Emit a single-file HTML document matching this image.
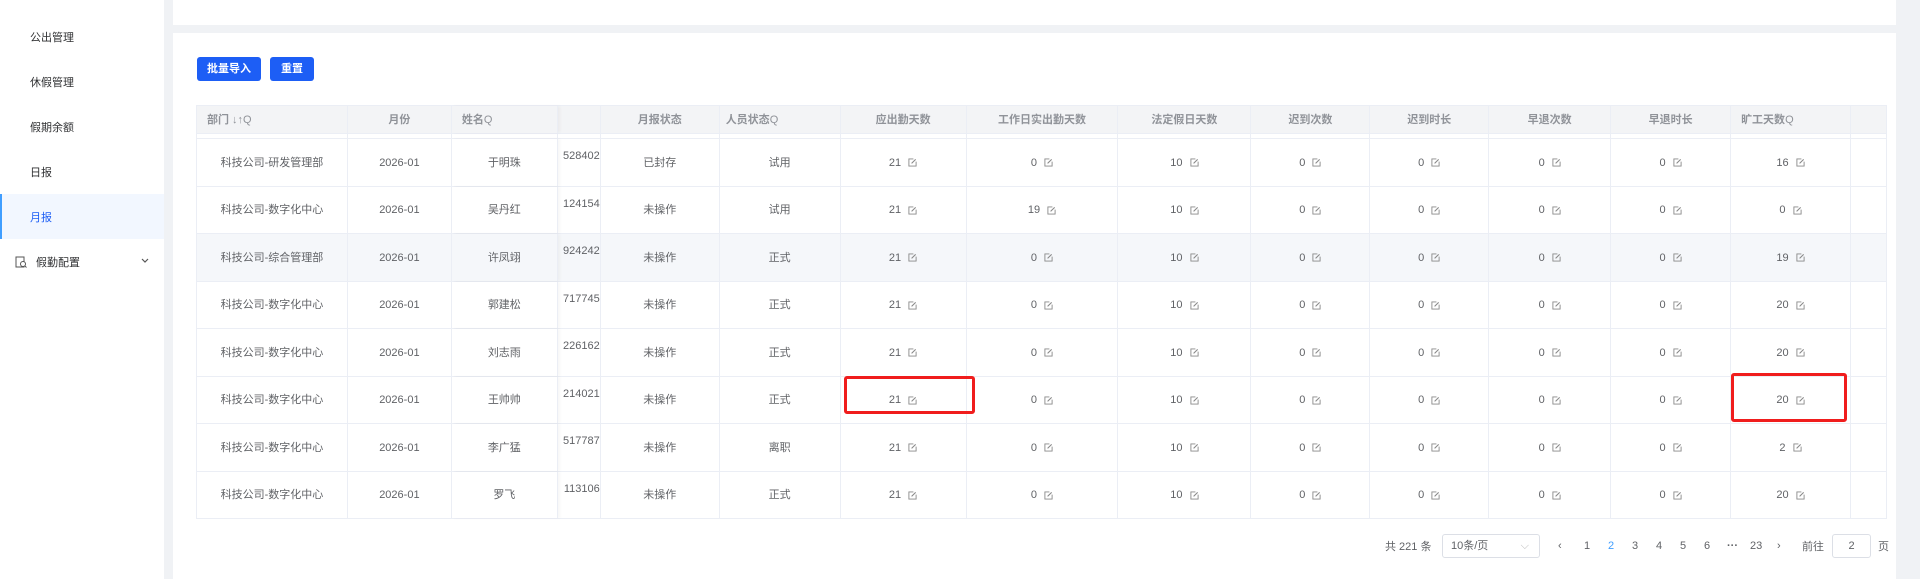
<!DOCTYPE html>
<html><head><meta charset="utf-8">
<style>
*{margin:0;padding:0;box-sizing:border-box}
body{width:1920px;height:579px;overflow:hidden;background:#f0f2f5;font-family:"Liberation Sans","Noto Sans CJK SC",sans-serif;font-size:11px;color:#606266;position:relative}
.side{position:absolute;left:0;top:0;width:164px;height:579px;background:#fff}
.mi{position:absolute;left:30px;font-size:11px;color:#303133}
.act{position:absolute;left:0;top:194px;width:164px;height:45px;background:#f2f7ff;border-left:2px solid #409eff}
.topcard{position:absolute;left:173px;top:0;width:1723px;height:25px;background:#fff}
.card{position:absolute;left:173px;top:33px;width:1723px;height:546px;background:#fff}
.btn{position:absolute;top:57px;height:24px;background:#1d5ef5;color:#fff;border-radius:3px;font-size:11px;line-height:24px;text-align:center;font-weight:bold}
.row{position:absolute;left:196px;width:1691px;display:flex;border-bottom:1px solid #ebeef5}
.row>div{border-right:1px solid #ebeef5;display:flex;align-items:center;justify-content:center;overflow:hidden;white-space:nowrap;height:100%;line-height:14px}
.hd{background:#f3f4f6;color:#909399;top:105px;height:29px;border-top:1px solid #ebeef5;border-left:1px solid #ebeef5}
.hd>div{font-weight:bold}
.hd .l{justify-content:flex-start;padding-left:10px}
.bd{border-left:1px solid #ebeef5;background:#fff}
.e{display:inline-block;width:9px;height:9px;margin-left:7px;vertical-align:middle}
.num{justify-content:flex-end!important;align-items:flex-start!important;padding-top:10px}
.fx{box-shadow:2px 0 3px rgba(0,0,0,0.04)}
.red{position:absolute;border:3px solid #f01d1d;border-radius:3px}
.pg{position:absolute;top:546px;transform:translateY(-50%);font-size:11px;color:#606266}
</style></head><body>
<div class="side">
<div class="mi" style="top:29px">公出管理</div>
<div class="mi" style="top:74px">休假管理</div>
<div class="mi" style="top:119px">假期余额</div>
<div class="mi" style="top:164px">日报</div>
<div class="act"></div>
<div class="mi" style="top:209px;color:#1d5ef5">月报</div>
<svg style="position:absolute;left:15px;top:256px" width="12" height="12" viewBox="0 0 12 12"><rect x="1" y="1" width="8" height="10" fill="none" stroke="#555" stroke-width="1"/><circle cx="8" cy="8" r="2.5" fill="#fff" stroke="#555"/><path d="M9.8 9.8L11.5 11.5" stroke="#555"/></svg>
<div class="mi" style="top:254px;left:36px">假勤配置</div>
<svg style="position:absolute;left:141px;top:258px" width="8" height="6" viewBox="0 0 8 6"><path d="M1 1L4 4L7 1" fill="none" stroke="#555" stroke-width="1.2"/></svg>
</div>
<div class="topcard"></div>
<div class="card"></div>
<div class="btn" style="left:197px;width:64px">批量导入</div>
<div class="btn" style="left:270px;width:44px">重置</div>

<div class="row hd">
<div class="l" style="width:151px">部门 <span style="font-weight:normal;margin-left:3px">↓↑Q</span></div>
<div style="width:104px">月份</div>
<div class="l fx" style="width:106px">姓名<span style="font-weight:normal">Q</span></div>
<div style="width:43px"></div>
<div style="width:119px">月报状态</div>
<div class="l" style="width:121px;padding-left:6px">人员状态<span style="font-weight:normal">Q</span></div>
<div style="width:126px">应出勤天数</div>
<div style="width:152px">工作日实出勤天数</div>
<div style="width:133px">法定假日天数</div>
<div style="width:119px">迟到次数</div>
<div style="width:119px">迟到时长</div>
<div style="width:122px">早退次数</div>
<div style="width:120px">早退时长</div>
<div class="l" style="width:120px">旷工天数<span style="font-weight:normal">Q</span></div>
<div style="width:36px"></div>
</div>
<div class="row" style="top:134px;height:5px;border-left:1px solid #ebeef5">
<div style="width:151px"></div><div style="width:104px"></div><div style="width:106px"></div><div style="width:43px"></div><div style="width:119px"></div><div style="width:121px"></div><div style="width:126px"></div><div style="width:152px"></div><div style="width:133px"></div><div style="width:119px"></div><div style="width:119px"></div><div style="width:122px"></div><div style="width:120px"></div><div style="width:120px"></div><div style="width:36px"></div>
</div>

<div id="rows"></div>
<script>
var E='<svg class="e" viewBox="0 0 10 10"><path d="M6 1H1V9H9V4" fill="none" stroke="#888" stroke-width="1"/><path d="M4 6L8.5 1.5" stroke="#888" stroke-width="1.2"/></svg>';
var d=[["研发管理部","于明珠","528402","已封存","试用",21,0,16],["数字化中心","吴丹红","124154","未操作","试用",21,19,0],["综合管理部","许凤翊","924242","未操作","正式",21,0,19],["数字化中心","郭建松","717745","未操作","正式",21,0,20],["数字化中心","刘志雨","226162","未操作","正式",21,0,20],["数字化中心","王帅帅","214021","未操作","正式",21,0,20],["数字化中心","李广猛","517787","未操作","离职",21,0,2],["数字化中心","罗飞","113106","未操作","正式",21,0,20]];
var h='';
d.forEach(function(r,i){
var t=139+Math.round(i*47.5), t2=139+Math.round((i+1)*47.5);
var bg=i==2?'background:#f5f7fa;':'';
h+='<div class="row bd" style="top:'+t+'px;height:'+(t2-t)+'px;'+bg+'">'+
'<div style="width:151px">科技公司-'+r[0]+'</div>'+
'<div style="width:104px">2026-01</div>'+
'<div class="fx" style="width:106px">'+r[1]+'</div>'+
'<div class="num" style="width:43px">'+r[2]+'</div>'+
'<div style="width:119px">'+r[3]+'</div>'+
'<div style="width:121px">'+r[4]+'</div>'+
'<div style="width:126px">'+r[5]+E+'</div>'+
'<div style="width:152px">'+r[6]+E+'</div>'+
'<div style="width:133px">10'+E+'</div>'+
'<div style="width:119px">0'+E+'</div>'+
'<div style="width:119px">0'+E+'</div>'+
'<div style="width:122px">0'+E+'</div>'+
'<div style="width:120px">0'+E+'</div>'+
'<div style="width:120px">'+r[7]+E+'</div>'+
'<div style="width:36px"></div></div>';
});
document.getElementById('rows').innerHTML=h;
</script>
<div class="red" style="left:844px;top:376px;width:131px;height:38px"></div>
<div class="red" style="left:1731px;top:373px;width:116px;height:49px"></div>

<div class="pg" style="left:1385px">共 221 条</div>
<div class="pg" style="left:1442px;width:98px;height:24px;border:1px solid #dcdfe6;border-radius:3px;padding-left:8px;line-height:22px">10条/页<span style="position:absolute;right:10px;color:#bbb">⌵</span></div>
<div class="pg" style="left:1558px">‹</div>
<div class="pg" style="left:1584px">1</div>
<div class="pg" style="left:1608px;color:#409eff">2</div>
<div class="pg" style="left:1632px">3</div>
<div class="pg" style="left:1656px">4</div>
<div class="pg" style="left:1680px">5</div>
<div class="pg" style="left:1704px">6</div>
<div class="pg" style="left:1727px;font-weight:bold">···</div>
<div class="pg" style="left:1750px">23</div>
<div class="pg" style="left:1777px">›</div>
<div class="pg" style="left:1802px">前往</div>
<div class="pg" style="left:1832px;width:39px;height:24px;border:1px solid #dcdfe6;border-radius:3px;text-align:center;line-height:22px">2</div>
<div class="pg" style="left:1878px">页</div>
</body></html>
